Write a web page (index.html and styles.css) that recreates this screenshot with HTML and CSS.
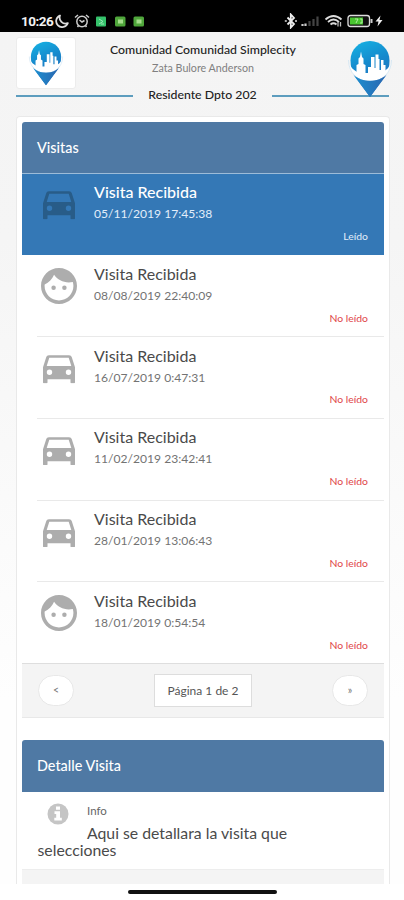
FILE: index.html
```html
<!DOCTYPE html>
<html lang="es">
<head>
<meta charset="utf-8">
<title>Visitas</title>
<link rel="stylesheet" href="styles.css">
</head>
<body>
<svg class="defs" width="0" height="0">
  <defs>
    <linearGradient id="pin-fill" x1="0" y1="0" x2="0.3" y2="1">
      <stop offset="0" stop-color="#16b4e4"/>
      <stop offset="0.5" stop-color="#1688cc"/>
      <stop offset="1" stop-color="#2a6db8"/>
    </linearGradient>
    <linearGradient id="tail-fill" x1="0" y1="0" x2="1" y2="0">
      <stop offset="0" stop-color="#1c8fd0"/>
      <stop offset="1" stop-color="#2a66b0"/>
    </linearGradient>
    <symbol id="pin" viewBox="0 0 46 58">
      <path d="M23 1C12 1 3.500 9.500 3.500 20.500c0 6.500 1.500 11.500 4.500 16L23 57l15-20.500c3-4.500 4.500-9.500 4.500-16C42.500 9.500 34 1 23 1z" fill="url(#pin-fill)"/>
      <path d="M9.500 33V25l2-1v-5.500l1.500-1.500 1-5.500 1 5.500 1.500 1.500V24l2 1v8h2.500v-6h3v6V17h3.500v11h1V14.500h3V19h1v11h1.500V20h2.500v5h2v8l-6 5H17z" fill="#fff"/>
      <path d="M2 24c1 10 9 17 21 17s20-7 21-17c-4 7-11.500 11-21 11S6 31 2 24z" fill="#fff"/>
      <path d="M1.500 20c0 13 9.500 21.500 21.500 21.500S44.500 33 44.500 20" fill="none" stroke="#cfe4f3" stroke-width=".8"/>
      <path d="M6.500 35C11 39 17 40.800 23 40.800s12-1.800 16.500-5.800L23 57z" fill="url(#tail-fill)"/>
    </symbol>
    <symbol id="car" viewBox="0 0 32 28">
      <path d="M6 0h20c1.500 0 2.400.8 2.800 2L32 12v15c0 .7-.4 1-1 1h-2.500c-.7 0-1-.4-1-1v-3h-23v3c0 .6-.4 1-1 1H1c-.6 0-1-.3-1-1V12L3.200 2C3.600.8 4.500 0 6 0zM6.300 2.500 3.700 10.800h24.600L25.700 2.500zM6.500 14.300a2.700 2.700 0 1 0 0 5.400 2.700 2.700 0 0 0 0-5.400zm19 0a2.700 2.700 0 1 0 0 5.400 2.700 2.700 0 0 0 0-5.400z" fill="currentColor" fill-rule="evenodd"/>
    </symbol>
    <symbol id="face" viewBox="2 2 20 20">
      <path d="M9 11.750a1.250 1.250 0 1 0 0 2.500 1.250 1.250 0 0 0 0-2.500zm6 0a1.250 1.250 0 1 0 0 2.500 1.250 1.250 0 0 0 0-2.500zM12 2C6.480 2 2 6.480 2 12s4.480 10 10 10 10-4.480 10-10S17.520 2 12 2zm0 18c-4.410 0-8-3.590-8-8 0-.29.020-.58.050-.86 2.360-1.050 4.230-2.980 5.210-5.370C11.070 8.330 14.050 10 17.420 10c.78 0 1.530-.09 2.250-.26.210.71.330 1.470.33 2.260 0 4.410-3.590 8-8 8z" fill="currentColor"/>
    </symbol>
  </defs>
</svg>

<div class="status">
  <span class="clock">10:26</span>
  <svg class="moon" width="14" height="14" viewBox="0 0 14 14"><path d="M5 1.500A6 6 0 1 0 12.800 9.200 6 6 0 0 1 5 1.500z" fill="none" stroke="#ddd" stroke-width="1.800" stroke-linejoin="round"/></svg>
  <svg class="alarm" width="16" height="14" viewBox="0 0 16 14"><circle cx="8" cy="7.500" r="5.200" fill="none" stroke="#ccc" stroke-width="1.500"/><path d="M1 3.500 4 1M15 3.500 12 1M3.500 13l1-1.500M12.500 13l-1-1.500M5.500 6 8 8l2.500-1.500" fill="none" stroke="#ccc" stroke-width="1.500"/></svg>
  <svg class="apps" width="49" height="11" viewBox="0 0 49 11"><rect x="0" y=".5" width="10" height="10" rx="1" fill="#35c26b"/><path d="M3 3l4 2.500-4 2.500M5 8h3" stroke="#9be8b8" fill="none"/><rect x="19" y=".5" width="10.500" height="10" rx="1.500" fill="#4fa63b"/><rect x="22" y="3.500" width="5" height="4" fill="#a5dc8c"/><rect x="37.500" y=".5" width="10.500" height="10" rx="1.500" fill="#4fa63b"/><rect x="40.500" y="3.500" width="5" height="4" fill="#a5dc8c"/></svg>
  <span class="spacer"></span>
  <svg class="radios" width="100" height="16" viewBox="0 0 100 16">
    <path d="M3.500 4.500 10 11 6.800 14.500V1.500L10 5 3.500 11.500" fill="none" stroke="#eee" stroke-width="1.800"/><path d="M0.800 8h2M11 8h2" stroke="#ddd" stroke-width="1.700"/>
    <path d="M18.500 13v-2M21.500 13v-2.500" stroke="#ccc" stroke-width="2.200"/><path d="M25.500 13V8M29.500 13V6M33.500 13V3.500" stroke="#444" stroke-width="2.200"/>
    <path d="M41.500 6.500q8-7 16 0M44 9q5.500-5 11 0M46.500 11.500q3-2.500 6 0" fill="none" stroke="#ddd" stroke-width="1.800"/><path d="M54 9v4.500M56.500 9v4.500" stroke="#bbb" stroke-width="1.300"/>
    <rect x="64" y="2.500" width="21.500" height="11" rx="2.500" fill="#111" stroke="#ddd" stroke-width="1.300"/><rect x="66" y="4.500" width="13" height="7" fill="#48c52f"/><path d="M71 6h3l-2 4M76 6h2v4h-2" fill="none" stroke="#c7f5b6" stroke-width=".8"/><path d="M87.500 6v4" stroke="#ccc" stroke-width="2"/>
    <path d="M96.500 2.500 91.500 8.500h3l-1 5 5-6.500h-3z" fill="#eee"/>
  </svg>
</div>

<header class="top">
  <div class="logo"><svg width="36" height="45"><use href="#pin"/></svg></div>
  <div class="who">
    <div class="community">Comunidad Comunidad Simplecity</div>
    <div class="person">Zata Bulore Anderson</div>
  </div>
  <svg class="brand" width="46" height="58"><use href="#pin"/></svg>
</header>
<div class="unit"><i></i><span>Residente Dpto 202</span><i></i></div>

<main class="panel">
  <section class="card">
    <h2>Visitas</h2>
    <ul class="list">
      <li class="row active"><svg class="car"><use href="#car"/></svg><div class="info"><div class="name">Visita Recibida</div><div class="date">05/11/2019 17:45:38</div></div><span class="state">Leído</span></li>
      <li class="row"><svg class="face"><use href="#face"/></svg><div class="info"><div class="name">Visita Recibida</div><div class="date">08/08/2019 22:40:09</div></div><span class="state">No leído</span></li>
      <li class="row"><svg class="car"><use href="#car"/></svg><div class="info"><div class="name">Visita Recibida</div><div class="date">16/07/2019 0:47:31</div></div><span class="state">No leído</span></li>
      <li class="row"><svg class="car"><use href="#car"/></svg><div class="info"><div class="name">Visita Recibida</div><div class="date">11/02/2019 23:42:41</div></div><span class="state">No leído</span></li>
      <li class="row"><svg class="car"><use href="#car"/></svg><div class="info"><div class="name">Visita Recibida</div><div class="date">28/01/2019 13:06:43</div></div><span class="state">No leído</span></li>
      <li class="row"><svg class="face"><use href="#face"/></svg><div class="info"><div class="name">Visita Recibida</div><div class="date">18/01/2019 0:54:54</div></div><span class="state">No leído</span></li>
    </ul>
    <div class="pager"><span class="round">&lt;</span><span class="page">Página 1 de 2</span><span class="round">»</span></div>
  </section>
  <section class="card detail">
    <h2>Detalle Visita</h2>
    <div class="body">
      <svg class="badge" viewBox="0 0 22 22"><circle cx="11" cy="11" r="10.500" fill="#c5c5c5"/><path d="M9 3.500h4v3.300H9zM7.500 8.300H13v6.500h1.800v2.700H7.300v-2.700h1.900V11H7.500z" fill="#fff"/></svg>
      <div class="label">Info</div>
      <p>Aqui se detallara la visita que selecciones</p>
    </div>
    <div class="foot"></div>
  </section>
</main>
<div class="home"><b></b></div>
</body>
</html>
```
FILE: styles.css
```css
* { box-sizing: border-box; }
body {
  margin: 0;
  height: 900px;
  overflow: hidden;
  display: flex;
  flex-direction: column;
  background: linear-gradient(#f4f4f4 32px, #f5f5f5 240px, #fefefe 700px);
  font-family: Lato, "Liberation Sans", sans-serif;
  color: #4a4a4a;
}
.defs { position: absolute; }
svg { display: block; flex: none; }
.status {
  height: 31.500px;
  flex: none;
  background: #000;
  display: flex;
  align-items: center;
  padding: 11px 20px 0 21px;
}
.clock {
  width: 33px;
  color: #f2f2f2;
  font: 700 13.500px/18px Roboto, sans-serif;
  letter-spacing: -.5px;
}
.moon { margin-left: 1px; }
.alarm { margin-left: 5px; }
.apps { margin-left: 6px; }
.spacer { flex: 1; }
.top {
  display: flex;
  justify-content: space-between;
  height: 56.500px;
  flex: none;
  padding: 5px 10px 0 16px;
}
.logo {
  width: 60px;
  height: 52px;
  background: #fff;
  border: 1px solid #ececec;
  border-radius: 3px;
  padding: 3px 0 0 11px;
}
.who { width: 200px; text-align: center; padding-top: 4.500px; margin-right: 17px; }
.community { font-size: 12.300px; line-height: 17px; font-weight: 500; color: #222; white-space: nowrap; }
.person { font-size: 10.700px; line-height: 18px; color: #808080; padding-top: 1px; white-space: nowrap; }
.brand { margin-top: 3px; margin-right: 1px; position: relative; }
.unit {
  display: flex;
  justify-content: space-between;
  align-items: center;
  height: 15px;
  flex: none;
  margin: 0 15px 0 16px;
  font-size: 12.300px;
  line-height: 15px;
  font-weight: 500;
  color: #222;
}
.unit i { width: 117px; height: 2px; background: #5d9dbe; }
.unit span { margin-top: -2px; }
.panel {
  margin: 12.500px 14px 0 16px;
  height: 768px;
  flex: none;
  border: 1px solid #e9e9e9;
  border-bottom: 0;
  border-radius: 4px 4px 0 0;
  background: #fff;
  padding: 5px;
}
.card h2 {
  margin: 0;
  height: 52px;
  padding: 0 15px;
  background: #4f79a4;
  border-bottom: 1px solid #9dbcd8;
  border-radius: 3px 3px 0 0;
  color: #fff;
  font-size: 14.400px;
  line-height: 51px;
  font-weight: 500;
}
.list { margin: 0; padding: 0; list-style: none; }
.row {
  height: 81.800px;
  display: flex;
  margin-left: 15px;
  padding: 8.500px 16px 0 2.500px;
  border-bottom: 1px solid #e9e9e9;
}
.row.active { margin: 0; padding-left: 17.500px; padding-top: 8px; background: #3478b6; border-color: #3478b6; color: #fff; }
.row:last-child { margin: 0; padding-left: 17.500px; border-color: #dedede; }
.row svg { color: #adadad; }
.face { width: 36px; height: 36px; margin: 4px 17.500px 0 1px; }
.car { width: 32px; height: 28.500px; margin: 9.500px 19.500px 0 3px; }
.row.active svg { color: #285c88; }
.info { flex: 1; }
.name { font-size: 16px; line-height: 20px; }
.active .name { font-weight: 500; }
.date { font-size: 12.100px; line-height: 16px; padding-top: 4px; color: #737373; }
.active .date { color: #e2eefa; }
.state { align-self: flex-end; font-size: 10.400px; line-height: 14px; color: #e04648; margin-bottom: 11.500px; }
.active .state { color: #e2eefa; }
.pager {
  height: 54px;
  padding: 0 16px;
  background: #f4f4f4;
  border-bottom: 1px solid #e8e8e8;
  display: flex;
  align-items: center;
  justify-content: space-between;
}
.round { width: 36px; height: 31px; border: 1px solid #e8e8e8; border-radius: 16px; background: #fff; text-align: center; font-size: 10.500px; line-height: 29px; color: #777; }
.page { width: 98px; height: 33px; border: 1px solid #ddd; background: #fff; text-align: center; font-size: 12px; line-height: 31px; color: #555; }
.detail { margin-top: 22px; }
.detail h2 { border-color: #4f79a4; }
.body { height: 78px; padding: 11px 16px 0 15.500px; border-bottom: 1px solid #ededed; }
.badge { float: left; width: 22px; height: 22px; margin: 0 18px 0 9.500px; }
.label { font-size: 11.500px; line-height: 16px; color: #666; }
p { margin: 5px 0 0; font-size: 15.800px; line-height: 17px; }
.foot { height: 14px; background: #f4f4f4; }
.home { height: 16px; flex: none; background: #fff; padding-top: 6px; }
.home b { display: block; width: 149px; height: 4px; margin-left: 128px; border-radius: 2px; background: #111; }
```
